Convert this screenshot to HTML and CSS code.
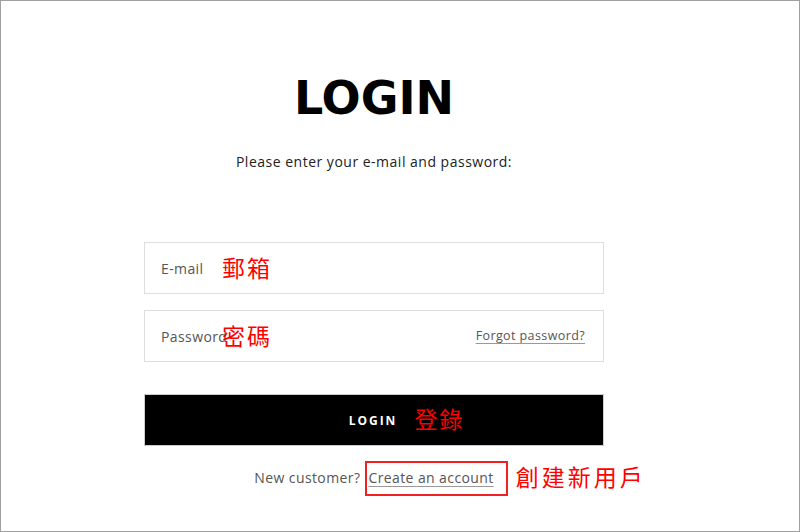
FILE: index.html
```html
<!DOCTYPE html>
<html lang="en">
  <head>
    <meta charset="UTF-8" />
    <meta name="viewport" content="width=device-width, initial-scale=1.0" />
    <title>Login</title>
    <link rel="stylesheet" href="styles.css">
  </head>
  <body>
    <div class="frame">
      <div class="login">
        <h1 class="login-title">LOGIN</h1>
        <p class="login-intro">Please enter your e-mail and password:</p>

        <form class="login-form">
          <div class="field">
            <input type="email" placeholder="E-mail">
            <span class="note note-email">郵箱</span>
          </div>

          <div class="field">
            <input type="password" placeholder="Password">
            <a href="#" class="forgot">Forgot password?</a>
            <span class="note note-password">密碼</span>
          </div>

          <button type="button" class="login-btn">
            <span class="login-btn-label">
              LOGIN
              <span class="note note-login">登錄</span>
            </span>
          </button>
        </form>

        <div class="signup">
          New customer?
          <span class="signup-link">
            <a href="#">Create an account</a>
            <span class="note-box"></span>
            <span class="note note-signup">創建新用戶</span>
          </span>
        </div>
      </div>
    </div>
  </body>
</html>
```

FILE: styles.css
```css
html,
body {
  margin: 0;
  padding: 0;
  background: #fff;
}

.frame {
  width: 800px;
  height: 532px;
  box-sizing: border-box;
  border: 1px solid #a0a0a0;
  overflow: hidden;
  font-family: "Open Sans", "Liberation Sans", sans-serif;
  color: #222;
}

.login {
  width: 460px;
  margin-left: 143px;
  padding-top: 73px;
}

.login-title {
  margin: 0;
  text-align: center;
  font-family: "DejaVu Sans", sans-serif;
  font-weight: bold;
  font-size: 46px;
  line-height: 48px;
  color: #000;
  letter-spacing: 0;
}

.login-intro {
  margin: 30px 0 0;
  text-align: center;
  font-size: 14px;
  line-height: 20px;
  letter-spacing: 0.5px;
  color: #222;
}

.login-form {
  margin-top: 70px;
  display: flex;
  flex-direction: column;
  gap: 16px;
}

.field {
  position: relative;
}

.field input {
  display: block;
  width: 100%;
  height: 52px;
  box-sizing: border-box;
  border: 1px solid #dedede;
  padding: 0 16px;
  font-family: "Open Sans", "Liberation Sans", sans-serif;
  font-size: 14px;
  letter-spacing: 0.4px;
  color: #222;
  outline: none;
}

.field input::placeholder {
  color: #555;
}

.forgot {
  position: absolute;
  right: 19px;
  top: 17px;
  font-size: 12.5px;
  letter-spacing: 0.4px;
  color: #555;
  text-decoration: underline;
  text-underline-offset: 3px;
  text-decoration-color: #999;
}

.note {
  position: absolute;
  font-family: "Noto Sans CJK TC", sans-serif;
  font-weight: normal;
  color: #ff0000;
  font-size: 23px;
  letter-spacing: 2px;
  line-height: 1;
  white-space: nowrap;
}

.note-email,
.note-password {
  left: 78px;
  top: 14px;
}

.login-btn {
  margin-top: 16px;
  height: 52px;
  background: #000;
  border: 1px solid #ccc;
  color: #fff;
  font-family: "Open Sans", "Liberation Sans", sans-serif;
  font-weight: bold;
  font-size: 12px;
  letter-spacing: 2px;
  display: flex;
  justify-content: center;
  align-items: center;
  padding: 0 2px 0 0;
  cursor: pointer;
}

.login-btn-label {
  position: relative;
}

.note-login {
  left: calc(100% + 17px);
  top: -5px;
}

.signup {
  margin-top: 22px;
  text-align: center;
  font-size: 14px;
  letter-spacing: 0.4px;
  color: #555;
}

.signup-link {
  position: relative;
  margin-left: 4px;
}

.signup-link a {
  color: #555;
  text-decoration: underline;
  text-underline-offset: 3px;
  text-decoration-color: #999;
}

.note-box {
  position: absolute;
  left: -3px;
  right: -14px;
  top: -7px;
  bottom: -9px;
  border: 2px solid #ee2222;
}

.note-signup {
  left: calc(100% + 22px);
  top: -3px;
  letter-spacing: 3px;
}
```
